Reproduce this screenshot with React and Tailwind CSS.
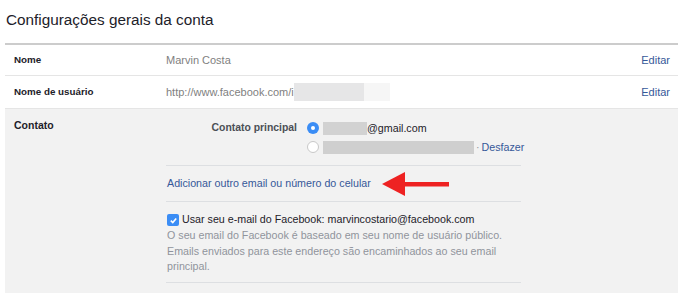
const FONT = { fontFamily: '"Liberation Sans", Arial, sans-serif' };

function Radio({ checked }) {
  return checked ? (
    <span className="flex h-[12px] w-[12px] shrink-0 items-center justify-center rounded-full bg-[#3b8df5]">
      <span className="h-[4px] w-[4px] rounded-full bg-white" />
    </span>
  ) : (
    <span className="h-[12px] w-[12px] shrink-0 rounded-full border border-[#c8c8c8] bg-white" />
  );
}

function Arrow() {
  return (
    <svg width="68" height="26" viewBox="0 0 68 26" className="ml-[11px] shrink-0">
      <polygon points="0,13 23,1 23,25" fill="#ee2222" />
      <rect x="20" y="11" width="47" height="4.5" fill="#ee2222" />
    </svg>
  );
}

export default function App() {
  return (
    <div className="h-[293px] w-[695px] overflow-hidden bg-white" style={FONT}>
      <h1 className="pl-[6px] pt-[10px] text-[15.3px] leading-[19px] text-[#1d2129]">
        Configurações gerais da conta
      </h1>
      <div className="ml-[5px] mt-[14px] w-[673px] border-t-2 border-[#cccccc]">
        <div className="flex h-[31px] items-center border-b border-[#e5e5e5]">
          <div className="w-[161px] shrink-0 pl-[9px] text-[9.8px] font-bold text-[#1d2129]">Nome</div>
          <div className="flex-1 text-[11px] text-[#7f7f7f]">Marvin Costa</div>
          <div className="pr-[8px] text-[11px] text-[#365899]">Editar</div>
        </div>
        <div className="flex h-[33px] items-center border-b border-[#e5e5e5]">
          <div className="w-[161px] shrink-0 pl-[9px] text-[9.8px] font-bold text-[#1d2129]">Nome de usuário</div>
          <div className="flex flex-1 items-center text-[11px] text-[#7f7f7f]">
            http://www.facebook.com/i
            <span className="h-[18px] w-[70px] bg-[#e6e6e7]" />
            <span className="h-[18px] w-[26px] bg-[#f6f6f6]" />
          </div>
          <div className="pr-[8px] text-[11px] text-[#365899]">Editar</div>
        </div>
        <div className="grid h-[200px] grid-cols-[161px_355px] bg-[#f2f2f2]">
          <div className="pl-[9px] pt-[9px] text-[10.5px] font-bold text-[#1d2129]">Contato</div>
          <div className="min-w-0">
            <div className="flex pt-[11px] text-[10.7px] leading-[16px]">
              <div className="w-[131px] shrink-0 text-right text-[10.4px] font-bold text-[#4b4f56]">
                Contato principal
              </div>
              <div className="ml-[10px] flex flex-col gap-[3px]">
                <div className="flex h-[16px] items-center text-[#1d2129]">
                  <Radio checked />
                  <span className="ml-[4px] h-[13px] w-[44px] bg-[#d2d2d2]" />
                  <span>@gmail.com</span>
                </div>
                <div className="flex h-[16px] items-center whitespace-nowrap">
                  <Radio />
                  <span className="ml-[4px] h-[13px] w-[151px] bg-[#cfcfcf]" />
                  <span className="ml-[2px] text-[#90949c]">·</span>
                  <span className="ml-[2px] text-[#365899]">Desfazer</span>
                </div>
              </div>
            </div>
            <div className="mt-[10px] flex h-[37px] items-center border-y border-[#dddfe2] pl-px text-[10.7px] text-[#365899]">
              Adicionar outro email ou número do celular
              <Arrow />
            </div>
            <div className="border-b border-[#dddfe2] pb-[7px] pl-px pr-[6px] pt-[10px] text-[10.7px] leading-[15.5px]">
              <div className="flex h-[16px] items-center gap-[3px] text-[#1d2129]">
                <span className="flex h-[12px] w-[12px] items-center justify-center rounded-[2px] bg-[#3b8df5]">
                  <svg width="9" height="9" viewBox="0 0 10 10">
                    <path d="M2 5.2 L4.2 7.3 L8 2.8" stroke="white" strokeWidth="1.8" fill="none" />
                  </svg>
                </span>
                Usar seu e-mail do Facebook: marvincostario@facebook.com
              </div>
              <p className="text-[#90949c]">
                O seu email do Facebook é baseado em seu nome de usuário público. Emails enviados para este endereço são encaminhados ao seu email principal.
              </p>
            </div>
          </div>
        </div>
      </div>
    </div>
  );
}
